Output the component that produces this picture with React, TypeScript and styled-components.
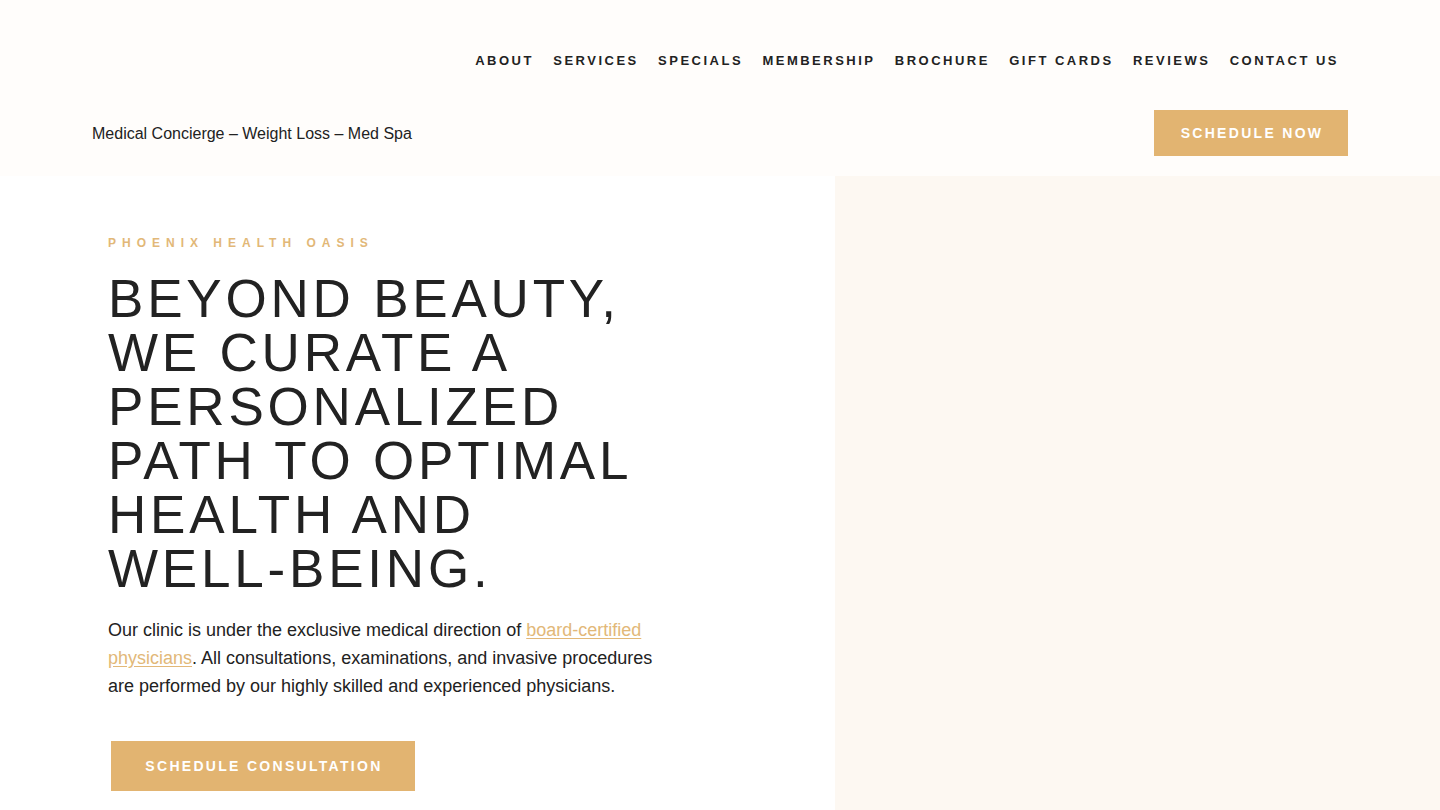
import React from "react";
import styled, { createGlobalStyle } from "styled-components";

const Global = createGlobalStyle`
  html, body { margin: 0; padding: 0; }
  body {
    background: #ffffff;
    font-family: "Liberation Sans", Arial, Helvetica, sans-serif;
    color: #222222;
  }
  * { box-sizing: border-box; }
`;

const Page = styled.div`
  width: 1440px;
  height: 810px;
  overflow: hidden;
  display: flex;
  flex-direction: column;
`;

const Header = styled.header`
  background: #fffdfb;
  height: 176px;
  display: flex;
  flex-direction: column;
  padding: 0 92px;
`;

const NavRow = styled.nav`
  display: flex;
  justify-content: flex-end;
  align-items: flex-start;
  height: 110px;
  padding: 53px 9px 0 0;
`;

const NavLink = styled.a`
  font-size: 13px;
  font-weight: 700;
  letter-spacing: 2.5px;
  text-transform: uppercase;
  color: #222222;
  text-decoration: none;
  margin-left: 19.3px;
  line-height: 15px;
  &:first-child { margin-left: 0; }
`;

const SubRow = styled.div`
  display: flex;
  justify-content: space-between;
  align-items: center;
  height: 46px;
`;

const Tagline = styled.div`
  font-size: 16px;
  color: #222222;
  padding-top: 2px;
`;

const GoldButton = styled.a<{ $w: number; $h: number }>`
  display: inline-flex;
  align-items: center;
  justify-content: center;
  width: ${(p) => p.$w}px;
  height: ${(p) => p.$h}px;
  background: #e2b471;
  color: #ffffff;
  font-size: 14px;
  font-weight: 700;
  letter-spacing: 2.3px;
  text-transform: uppercase;
  text-decoration: none;
  padding-left: 2px;
`;

const Hero = styled.section`
  flex: 1;
  display: grid;
  grid-template-columns: 835px 1fr;
`;

const HeroLeft = styled.div`
  background: #ffffff;
  padding: 60px 0 0 108px;
`;

const HeroRight = styled.div`
  background: #fdf8f2;
`;

const Eyebrow = styled.div`
  font-size: 12px;
  font-weight: 700;
  letter-spacing: 6px;
  color: #e2b878;
  line-height: 14px;
  text-transform: uppercase;
`;

const Headline = styled.h1`
  margin: 22px 0 0 0;
  font-size: 53px;
  font-weight: 400;
  line-height: 54px;
  letter-spacing: 3.8px;
  color: #222222;
  text-transform: uppercase;
  width: 545px;
`;

const NoBreak = styled.span`
  white-space: nowrap;
`;

const Body = styled.p`
  margin: 20px 0 0 0;
  font-size: 18px;
  line-height: 28px;
  color: #222222;
  width: 560px;
`;

const Link = styled.a`
  color: #e2b878;
  text-decoration: underline;
  text-underline-offset: 2px;
`;

const CtaWrap = styled.div`
  margin-top: 41px;
  margin-left: 3px;
`;

const navItems = [
  "About",
  "Services",
  "Specials",
  "Membership",
  "Brochure",
  "Gift Cards",
  "Reviews",
  "Contact Us",
];

export default function App() {
  return (
    <>
      <Global />
      <Page>
        <Header>
          <NavRow>
            {navItems.map((n) => (
              <NavLink key={n} href="#">
                {n}
              </NavLink>
            ))}
          </NavRow>
          <SubRow>
            <Tagline>Medical Concierge – Weight Loss – Med Spa</Tagline>
            <GoldButton href="#" $w={194} $h={46}>
              Schedule Now
            </GoldButton>
          </SubRow>
        </Header>
        <Hero>
          <HeroLeft>
            <Eyebrow>Phoenix Health Oasis</Eyebrow>
            <Headline>
              Beyond beauty, we curate a personalized path to optimal health and{" "}
              <NoBreak>well-being.</NoBreak>
            </Headline>
            <Body>
              Our clinic is under the exclusive medical direction of{" "}
              <Link href="#">board-certified physicians</Link>. All
              consultations, examinations, and invasive procedures are performed
              by our highly skilled and experienced physicians.
            </Body>
            <CtaWrap>
              <GoldButton href="#" $w={304} $h={50}>
                Schedule Consultation
              </GoldButton>
            </CtaWrap>
          </HeroLeft>
          <HeroRight />
        </Hero>
      </Page>
    </>
  );
}
